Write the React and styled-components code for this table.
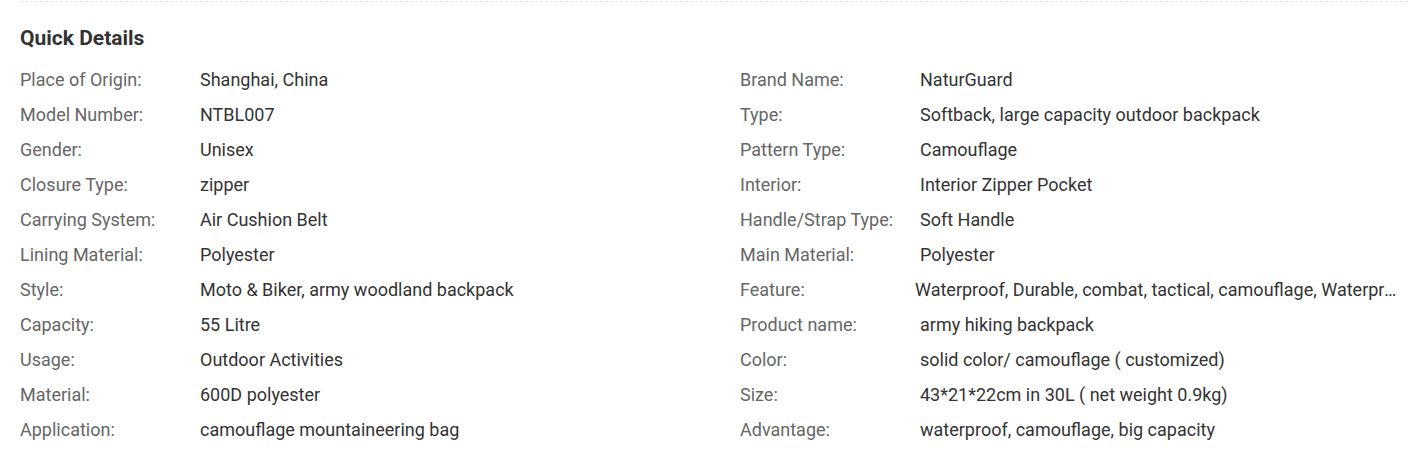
import React from 'react';
import styled, { createGlobalStyle } from 'styled-components';

const GlobalStyle = createGlobalStyle`
  body {
    margin: 0;
    background: #fff;
    font-family: Roboto, "Liberation Sans", Arial, sans-serif;
  }
`;

const Section = styled.section`
  margin: 1px 20px 0;
  padding-top: 22px;
  border-top: 1px dashed #e3e3e3;
`;

const Heading = styled.h2`
  margin: 0 0 10px;
  font-size: 21px;
  line-height: 28px;
  font-weight: 700;
  color: #333;
`;

const Grid = styled.div`
  display: grid;
  grid-template-columns: 720px 1fr;
`;

const Item = styled.div`
  display: flex;
  min-width: 0;
  height: 35px;
  padding-right: 10px;
  align-items: center;
  font-size: 18px;
`;

const Label = styled.span`
  flex: 0 0 180px;
  color: #666;
`;

const Value = styled.span`
  flex: 1;
  min-width: 0;
  margin-left: ${(p) => (p.$shift ? `-${p.$shift}px` : '0')};
  color: #333;
  white-space: nowrap;
  overflow: hidden;
  text-overflow: ellipsis;
`;

const details = [
  ['Place of Origin:', 'Shanghai, China'],
  ['Brand Name:', 'NaturGuard'],
  ['Model Number:', 'NTBL007'],
  ['Type:', 'Softback, large capacity outdoor backpack'],
  ['Gender:', 'Unisex'],
  ['Pattern Type:', 'Camouflage'],
  ['Closure Type:', 'zipper'],
  ['Interior:', 'Interior Zipper Pocket'],
  ['Carrying System:', 'Air Cushion Belt'],
  ['Handle/Strap Type:', 'Soft Handle'],
  ['Lining Material:', 'Polyester'],
  ['Main Material:', 'Polyester'],
  ['Style:', 'Moto & Biker, army woodland backpack'],
  ['Feature:', 'Waterproof, Durable, combat, tactical, camouflage, Waterproof, Anti-theft', 5],
  ['Capacity:', '55 Litre'],
  ['Product name:', 'army hiking backpack'],
  ['Usage:', 'Outdoor Activities'],
  ['Color:', 'solid color/ camouflage ( customized)'],
  ['Material:', '600D polyester'],
  ['Size:', '43*21*22cm in 30L ( net weight 0.9kg)'],
  ['Application:', 'camouflage mountaineering bag'],
  ['Advantage:', 'waterproof, camouflage, big capacity'],
];

const App = () => (
  <>
    <GlobalStyle />
    <Section>
      <Heading>Quick Details</Heading>
      <Grid>
        {details.map(([label, value, shift]) => (
          <Item key={label}>
            <Label>{label}</Label>
            <Value $shift={shift}>{value}</Value>
          </Item>
        ))}
      </Grid>
    </Section>
  </>
);

export default App;
